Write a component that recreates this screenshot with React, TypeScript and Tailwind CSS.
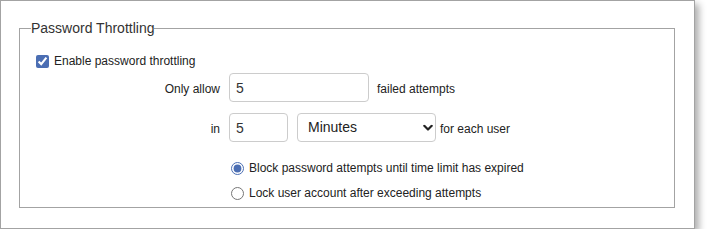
import { useState } from "react"

function Chevron() {
	return (
		<svg
			className="pointer-events-none absolute right-[3px] top-1/2 -translate-y-1/2"
			width="10"
			height="7"
			viewBox="0 0 10 7"
			fill="none"
		>
			<path d="M1.3 1.3 L5 5 L8.7 1.3" stroke="#222" strokeWidth="2.2" strokeLinecap="round" strokeLinejoin="round" />
		</svg>
	)
}

export default function App() {
	const [enabled, setEnabled] = useState(true)
	const [mode, setMode] = useState("block")

	return (
		<div className="p-0 font-['Liberation_Sans',Arial,sans-serif] text-[12px] text-[#222]">
			<div className="w-[695px] h-[229px] border border-[#a3a3a3] bg-white pt-[19px] pl-[18px] pr-[19px] shadow-[4px_4px_7px_rgba(0,0,0,0.32)]">
				<fieldset className="border border-[#a3a3a3] px-[11px] pb-[4px] h-[188px]">
					<legend className="p-0 text-[14px] leading-[16px] text-[#333]">Password Throttling</legend>

					{/* Enable checkbox */}
					<label className="mt-[18px] flex h-[14px] items-center gap-[5px]">
						<input
							type="checkbox"
							checked={enabled}
							onChange={(e) => setEnabled(e.target.checked)}
							className="ml-[5px] h-[13px] w-[13px] accent-[#4b6eb3]"
						/>
						<span>Enable password throttling</span>
					</label>

					{/* Only allow */}
					<div className="mt-[5px] flex items-baseline">
						<span className="w-[189px] text-right">Only allow</span>
						<input
							type="text"
							defaultValue="5"
							className="ml-[9px] h-[29px] w-[140px] rounded-[4px] border border-[#cccccc] px-[6px] text-[14px] text-[#333] outline-none"
						/>
						<span className="ml-[8px]">failed attempts</span>
					</div>

					{/* in ... for each user */}
					<div className="mt-[11px] flex items-baseline">
						<span className="w-[189px] text-right">in</span>
						<input
							type="text"
							defaultValue="5"
							className="ml-[9px] h-[29px] w-[59px] rounded-[4px] border border-[#cccccc] px-[6px] text-[14px] text-[#333] outline-none"
						/>
						<div className="relative ml-[9px] self-center">
							<select
								defaultValue="Minutes"
								className="h-[29px] w-[139px] appearance-none rounded-[4px] border border-[#cccccc] bg-white pl-[10px] text-[14px] text-[#222] outline-none"
							>
								<option>Minutes</option>
								<option>Hours</option>
								<option>Days</option>
							</select>
							<Chevron />
						</div>
						<span className="ml-[4px]">for each user</span>
					</div>

					{/* Radio options */}
					<div className="mt-[16px] ml-[200px] flex flex-col gap-[5px]">
						<label className="flex h-[20px] items-center gap-[5px]">
							<input
								type="radio"
								name="mode"
								checked={mode === "block"}
								onChange={() => setMode("block")}
								className="h-[13px] w-[13px] accent-[#4b6eb3]"
							/>
							<span>Block password attempts until time limit has expired</span>
						</label>
						<label className="flex h-[20px] items-center gap-[5px]">
							<input
								type="radio"
								name="mode"
								checked={mode === "lock"}
								onChange={() => setMode("lock")}
								className="h-[13px] w-[13px] accent-[#4b6eb3]"
							/>
							<span>Lock user account after exceeding attempts</span>
						</label>
					</div>
				</fieldset>
			</div>
		</div>
	)
}
